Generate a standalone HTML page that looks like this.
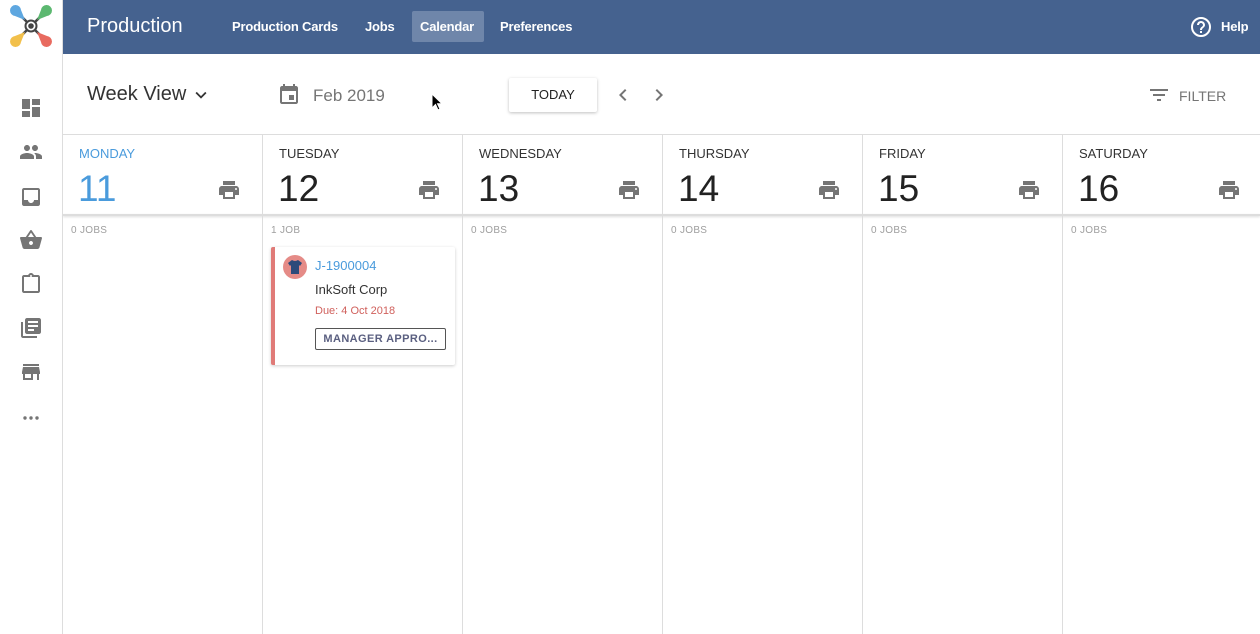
<!DOCTYPE html>
<html><head><style>
*{box-sizing:border-box;margin:0;padding:0}
body{width:1260px;height:634px;overflow:hidden;background:#fff;font-family:"Liberation Sans",Arial,sans-serif;position:relative}
.a{position:absolute}
.side{left:0;top:0;width:63px;height:634px;border-right:1px solid #ddd;background:#fff}
.top{left:63px;top:0;width:1197px;height:54px;background:#45628f;color:#fff}
.nav{top:19px;font-size:13px;font-weight:bold;letter-spacing:-.2px}
.ic{fill:#757575}
.col{top:135px;width:200px;height:499px;border-left:1px solid #ddd}
.dn{font-size:13px;color:#333;position:absolute;left:16px;top:11px}
.num{font-size:37px;color:#222;position:absolute;left:15px;top:33px}
.pr{position:absolute;left:154px;top:43px}
.jobs{position:absolute;left:8px;top:90px;font-size:10px;color:#9e9e9e;letter-spacing:.3px}
</style></head><body>
<div class="a side">
<svg class="a" style="left:9px;top:4px" width="44" height="44" viewBox="0 0 44 44">
<path d="M10 10 L34 34 M34 10 L10 34" stroke="#444" stroke-width="2.5" fill="none"/>
<circle cx="22" cy="22" r="5.5" fill="#fff" stroke="#444" stroke-width="2"/><circle cx="22" cy="22" r="2.8" fill="#444"/>
<path d="M16 16 L6 12 A5.5 5.5 0 1 1 12 6 Z" fill="#5ea7e0"/>
<path d="M28 16 L38 12 A5.5 5.5 0 1 0 32 6 Z" fill="#5cb870"/>
<path d="M16 28 L6 32 A5.5 5.5 0 1 0 12 38 Z" fill="#f2c04b"/>
<path d="M28 28 L38 32 A5.5 5.5 0 1 1 32 38 Z" fill="#e86a5f"/>
</svg>
<svg class="a ic" style="left:19px;top:96px" width="24" height="24" viewBox="0 0 24 24"><path d="M3 13h8V3H3v10zm0 8h8v-6H3v6zm10 0h8V11h-8v10zm0-18v6h8V3h-8z"/></svg>
<svg class="a ic" style="left:19px;top:140px" width="24" height="24" viewBox="0 0 24 24"><path d="M16 11c1.66 0 2.99-1.34 2.99-3S17.66 5 16 5c-1.66 0-3 1.34-3 3s1.34 3 3 3zm-8 0c1.66 0 2.99-1.34 2.99-3S9.66 5 8 5C6.34 5 5 6.34 5 8s1.34 3 3 3zm0 2c-2.33 0-7 1.170-7 3.5V19h14v-2.5c0-2.33-4.67-3.5-7-3.5zm8 0c-.29 0-.62.02-.97.05 1.16.84 1.97 1.970 1.97 3.45V19h6v-2.5c0-2.33-4.67-3.5-7-3.5z"/></svg>
<svg class="a ic" style="left:19px;top:185px" width="24" height="24" viewBox="0 0 24 24"><path d="M19 3H4.99c-1.11 0-1.98.89-1.98 2L3 19c0 1.1.88 2 1.99 2H19c1.1 0 2-.9 2-2V5c0-1.11-.9-2-2-2zm0 12h-4c0 1.66-1.35 3-3 3s-3-1.34-3-3H4.99V5H19v10z"/></svg>
<svg class="a ic" style="left:19px;top:228px" width="24" height="24" viewBox="0 0 24 24"><path d="M17.21 9l-4.38-6.56c-.19-.28-.51-.42-.83-.42-.32 0-.64.14-.83.43L6.79 9H2c-.55 0-1 .45-1 1 0 .09.01.18.04.27l2.54 9.27c.23.84 1 1.460 1.92 1.46h13c.92 0 1.69-.62 1.93-1.46l2.54-9.27L23 10c0-.55-.45-1-1-1h-4.79zM9 9l3-4.4L15 9H9zm3 8c-1.1 0-2-.9-2-2s.9-2 2-2 2 .9 2 2-.9 2-2 2z"/></svg>
<svg class="a ic" style="left:19px;top:272px" width="24" height="24" viewBox="0 0 24 24"><path d="M19 3h-4.18C14.4 1.84 13.3 1 12 1c-1.3 0-2.4.84-2.82 2H5c-1.1 0-2 .9-2 2v14c0 1.1.9 2 2 2h14c1.1 0 2-.9 2-2V5c0-1.1-.9-2-2-2zm-7 0c.55 0 1 .45 1 1s-.45 1-1 1-1-.45-1-1 .45-1 1-1zm7 16H5V5h14v14z"/></svg>
<svg class="a ic" style="left:19px;top:316px" width="24" height="24" viewBox="0 0 24 24"><path d="M4 6H2v14c0 1.1.9 2 2 2h14v-2H4V6zm16-4H8c-1.1 0-2 .9-2 2v12c0 1.1.9 2 2 2h12c1.1 0 2-.9 2-2V4c0-1.1-.9-2-2-2zm-1 9H9V9h10v2zm-4 4H9v-2h6v2zm4-8H9V5h10v2z"/></svg>
<svg class="a ic" style="left:19px;top:360px" width="24" height="24" viewBox="0 0 24 24"><path d="M20 4H4v2h16V4zm1 10v-2l-1-5H4l-1 5v2h1v6h10v-6h4v6h2v-6h1zm-9 4H6v-4h6v4z"/></svg>
<svg class="a ic" style="left:19px;top:406px" width="24" height="24" viewBox="0 0 24 24"><circle cx="6" cy="12" r="1.7"/><circle cx="12" cy="12" r="1.7"/><circle cx="18" cy="12" r="1.7"/></svg>
</div>
<div class="a top">
<div class="a" style="left:24px;top:15px;font-size:20px">Production</div>
<div class="a nav" style="left:169px">Production Cards</div>
<div class="a nav" style="left:302px">Jobs</div>
<div class="a" style="left:349px;top:11px;width:72px;height:31px;background:#6f86aa;border-radius:2px"></div>
<div class="a nav" style="left:357px">Calendar</div>
<div class="a nav" style="left:437px">Preferences</div>
<svg class="a" style="left:1126px;top:15px" width="24" height="24" viewBox="0 0 24 24"><circle cx="12" cy="12" r="9" fill="none" stroke="#fff" stroke-width="2"/><path fill="#fff" d="M11 18h2v-2h-2v2zm1-12c-2.21 0-4 1.79-4 4h2c0-1.1.9-2 2-2s2 .9 2 2c0 2-3 1.75-3 5h2c0-2.25 3-2.5 3-5 0-2.21-1.79-4-4-4z"/></svg>
<div class="a nav" style="left:1158px">Help</div>
</div>
<div class="a" style="left:87px;top:83px;font-size:20px;color:#333">Week View</div>
<svg class="a" style="left:190px;top:84px" width="22" height="22" viewBox="0 0 24 24"><path fill="#333" d="M7.41 8.59L12 13.17l4.59-4.58L18 10l-6 6-6-6z"/></svg>
<svg class="a ic" style="left:277px;top:83px" width="24" height="24" viewBox="0 0 24 24"><path d="M17 12h-5v5h5v-5zM16 1v2H8V1H6v2H5c-1.11 0-1.99.9-1.99 2L3 19c0 1.1.89 2 2 2h14c1.1 0 2-.9 2-2V5c0-1.1-.9-2-2-2h-1V1h-2zm3 18H5V8h14v11z"/></svg>
<div class="a" style="left:313px;top:86px;font-size:17px;color:#757575">Feb 2019</div>
<svg class="a" style="left:431px;top:93px" width="12" height="18" viewBox="0 0 12 18"><path d="M1 1v14l3.5-3.5 2.5 5.5 2-1-2.5-5.2H11z" fill="#000" stroke="#fff" stroke-width="1"/></svg>
<div class="a" style="left:509px;top:78px;width:88px;height:34px;background:#fff;box-shadow:0 1px 3px rgba(0,0,0,.25);border-radius:2px;font-size:13px;color:#222;text-align:center;line-height:33px">TODAY</div>
<svg class="a" style="left:611px;top:83px" width="24" height="24" viewBox="0 0 24 24"><path fill="#757575" d="M15.41 7.41L14 6l-6 6 6 6 1.41-1.41L10.83 12z"/></svg>
<svg class="a" style="left:647px;top:83px" width="24" height="24" viewBox="0 0 24 24"><path fill="#757575" d="M10 6L8.59 7.41 13.17 12l-4.58 4.59L10 18l6-6z"/></svg>
<svg class="a ic" style="left:1147px;top:83px" width="24" height="24" viewBox="0 0 24 24"><path d="M10 18h4v-2h-4v2zM3 6v2h18V6H3zm3 7h12v-2H6v2z"/></svg>
<div class="a" style="left:1179px;top:88px;font-size:14px;color:#757575">FILTER</div>
<div class="a" style="left:63px;top:134px;width:1197px;border-top:1px solid #ddd"></div>
<div class="a" style="left:63px;top:214px;width:1197px;height:2px;background:#ddd;box-shadow:0 1px 2px rgba(0,0,0,.15)"></div>

<div class="a col" style="left:62px"><div class="dn" style="color:#4a9bdc">MONDAY</div><div class="num" style="color:#4a9bdc">11</div><svg class="pr ic" width="24" height="24" viewBox="0 0 24 24"><path d="M19 8H5c-1.66 0-3 1.34-3 3v6h4v4h12v-4h4v-6c0-1.66-1.34-3-3-3zm-3 11H8v-5h8v5zm3-7c-.55 0-1-.45-1-1s.45-1 1-1 1 .45 1 1-.45 1-1 1zm-1-9H6v4h12V3z"/></svg><div class="jobs">0 JOBS</div></div>
<div class="a col" style="left:262px"><div class="dn">TUESDAY</div><div class="num">12</div><svg class="pr ic" width="24" height="24" viewBox="0 0 24 24"><path d="M19 8H5c-1.66 0-3 1.34-3 3v6h4v4h12v-4h4v-6c0-1.66-1.34-3-3-3zm-3 11H8v-5h8v5zm3-7c-.55 0-1-.45-1-1s.45-1 1-1 1 .45 1 1-.45 1-1 1zm-1-9H6v4h12V3z"/></svg><div class="jobs">1 JOB</div>
<div class="a" style="left:8px;top:112px;width:184px;height:118px;background:#fff;border-left:4px solid #e07b78;box-shadow:0 1px 3px rgba(0,0,0,.2);border-radius:2px">
<div class="a" style="left:8px;top:8px;width:24px;height:24px;border-radius:50%;background:#e58b87"></div>
<svg class="a" style="left:12px;top:12px" width="16" height="16" viewBox="0 0 16 16"><path d="M5 1 L1 4 L3 7 L4 6 V15 H12 V6 L13 7 L15 4 L11 1 Q8 3 5 1z" fill="#2d4a7a"/></svg>
<div class="a" style="left:40px;top:11px;font-size:13px;color:#4a9bdc">J-1900004</div>
<div class="a" style="left:40px;top:35px;font-size:13px;color:#333">InkSoft Corp</div>
<div class="a" style="left:40px;top:58px;font-size:11px;color:#d0605c">Due: 4 Oct 2018</div>
<div class="a" style="left:40px;top:81px;width:131px;height:22px;border:1px solid #555;border-radius:2px;font-size:11px;font-weight:bold;color:#5a5f80;text-align:center;line-height:20px;letter-spacing:.4px">MANAGER APPRO...</div>
</div></div>
<div class="a col" style="left:462px"><div class="dn">WEDNESDAY</div><div class="num">13</div><svg class="pr ic" width="24" height="24" viewBox="0 0 24 24"><path d="M19 8H5c-1.66 0-3 1.34-3 3v6h4v4h12v-4h4v-6c0-1.66-1.34-3-3-3zm-3 11H8v-5h8v5zm3-7c-.55 0-1-.45-1-1s.45-1 1-1 1 .45 1 1-.45 1-1 1zm-1-9H6v4h12V3z"/></svg><div class="jobs">0 JOBS</div></div>
<div class="a col" style="left:662px"><div class="dn">THURSDAY</div><div class="num">14</div><svg class="pr ic" width="24" height="24" viewBox="0 0 24 24"><path d="M19 8H5c-1.66 0-3 1.34-3 3v6h4v4h12v-4h4v-6c0-1.66-1.34-3-3-3zm-3 11H8v-5h8v5zm3-7c-.55 0-1-.45-1-1s.45-1 1-1 1 .45 1 1-.45 1-1 1zm-1-9H6v4h12V3z"/></svg><div class="jobs">0 JOBS</div></div>
<div class="a col" style="left:862px"><div class="dn">FRIDAY</div><div class="num">15</div><svg class="pr ic" width="24" height="24" viewBox="0 0 24 24"><path d="M19 8H5c-1.66 0-3 1.34-3 3v6h4v4h12v-4h4v-6c0-1.66-1.34-3-3-3zm-3 11H8v-5h8v5zm3-7c-.55 0-1-.45-1-1s.45-1 1-1 1 .45 1 1-.45 1-1 1zm-1-9H6v4h12V3z"/></svg><div class="jobs">0 JOBS</div></div>
<div class="a col" style="left:1062px"><div class="dn">SATURDAY</div><div class="num">16</div><svg class="pr ic" width="24" height="24" viewBox="0 0 24 24"><path d="M19 8H5c-1.66 0-3 1.34-3 3v6h4v4h12v-4h4v-6c0-1.66-1.34-3-3-3zm-3 11H8v-5h8v5zm3-7c-.55 0-1-.45-1-1s.45-1 1-1 1 .45 1 1-.45 1-1 1zm-1-9H6v4h12V3z"/></svg><div class="jobs">0 JOBS</div></div>
</body></html>
